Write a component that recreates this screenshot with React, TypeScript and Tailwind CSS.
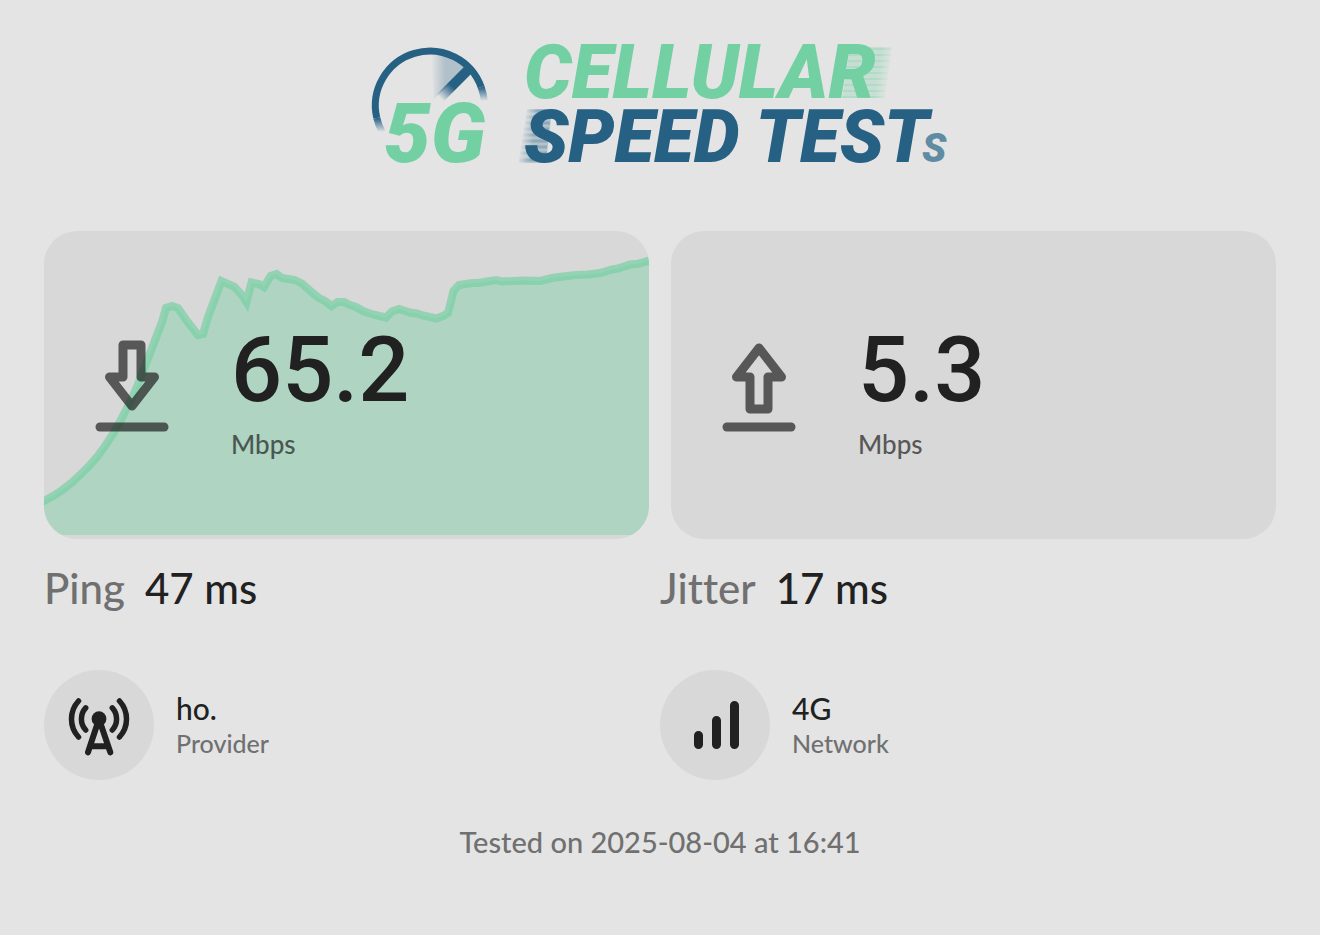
import { ReactNode } from 'react'

const speedPath =
  'M-4 272 L0 270 L10 264.5 L19 258.5 L28 251.5 L36 244 L45 235 L53 226 L61 215 L69 203 L76 190.5 L83 177 L88 167 L93 156 L98 143 L103 130 L108 117 L113 104 L118 91 L122 77 L128 75 L134 77 L143 90 L154 104 L159 103 L164 86 L170 70 L177.5 50 L190 55.5 L198 64 L202.5 71 L207.5 51.5 L215 53 L220 56 L226.5 45 L232.5 43 L238 47 L251 49 L258 52.5 L268 61.5 L275 67 L281 70 L287.5 75 L293.5 71 L300 71 L306 74 L312 76 L319 80 L329 83.5 L342 86.5 L348 80.5 L355 78 L366 81.5 L373 82.5 L379 84.5 L392 87.5 L399 85 L404 82 L409.5 60 L415 54 L428 52 L434 52 L443 50.5 L452 49 L458 50.5 L479 49.5 L496 50 L508 47 L519 45.5 L532 44 L544 43.5 L556 42 L568 38.5 L574 37.5 L586 33.5 L593 33 L605 29.5'

function Logo() {
  return (
    <svg viewBox="0 0 576 120" className="w-[576px] max-w-full overflow-visible">
      <defs>
        <linearGradient id="fadeLeft" gradientUnits="userSpaceOnUse" x1="0" y1="74" x2="0" y2="88">
          <stop offset="0" stopColor="#266184" />
          <stop offset="1" stopColor="#266184" stopOpacity="0" />
        </linearGradient>
        <linearGradient id="fadeRight" gradientUnits="userSpaceOnUse" x1="0" y1="43" x2="0" y2="57">
          <stop offset="0" stopColor="#266184" />
          <stop offset="1" stopColor="#266184" stopOpacity="0" />
        </linearGradient>
        <linearGradient id="needle" gradientUnits="userSpaceOnUse" x1="83" y1="39" x2="68" y2="54">
          <stop offset="0.2" stopColor="#266184" />
          <stop offset="1" stopColor="#266184" stopOpacity="0" />
        </linearGradient>
        <linearGradient id="sweep" gradientUnits="userSpaceOnUse" x1="59" y1="0" x2="73" y2="0">
          <stop offset="0" stopColor="#266184" stopOpacity="0" />
          <stop offset="1" stopColor="#266184" stopOpacity="0.27" />
        </linearGradient>
        <linearGradient id="greenTrail" gradientUnits="userSpaceOnUse" x1="506" y1="28" x2="519" y2="30">
          <stop offset="0" stopColor="#72d0a2" stopOpacity="0.26" />
          <stop offset="1" stopColor="#72d0a2" stopOpacity="0" />
        </linearGradient>
        <linearGradient id="blueTrail" gradientUnits="userSpaceOnUse" x1="149" y1="92" x2="162" y2="94">
          <stop offset="0" stopColor="#266184" stopOpacity="0" />
          <stop offset="1" stopColor="#266184" stopOpacity="0.26" />
        </linearGradient>
      </defs>

      {/* gauge */}
      <path d="M59 10 A52 52 0 0 1 95 24 L62 55 Z" fill="url(#sweep)" />
      <path d="M4.8 74 A54.5 54.5 0 0 1 109.1 43" fill="none" stroke="#266184" strokeWidth="7" />
      <path d="M4.8 74 A54.5 54.5 0 0 0 10.1 88" fill="none" stroke="url(#fadeLeft)" strokeWidth="7" />
      <path d="M109.1 43 A54.5 54.5 0 0 1 112.3 57" fill="none" stroke="url(#fadeRight)" strokeWidth="7" />
      <path d="M98 24 L67 55" fill="none" stroke="url(#needle)" strokeWidth="10" />

      {/* motion trails */}
      <path d="M478 3 H520 L513 54 H470 Z" fill="url(#greenTrail)" />
      <path
        d="M478 5 H520 M477 11 H519 M476 17 H518 M475 23 H517 M474 29 H516 M473 35 H516 M472 41 H515 M471 47 H514 M470 53 H513"
        stroke="url(#greenTrail)"
        strokeWidth="2"
      />
      <path d="M155 65 H180 L174 119 H146 Z" fill="url(#blueTrail)" />
      <path
        d="M155 67 H180 M154 73 H179 M153 79 H178 M152 85 H177 M151 91 H176 M150 97 H176 M149 103 H175 M148 109 H175 M147 116 H174"
        stroke="url(#blueTrail)"
        strokeWidth="3"
      />

      <g fontFamily="Roboto, sans-serif" fontWeight="900" fontStyle="italic">
        <text x="12" y="118" fontSize="83" fill="#72d0a2">5G</text>
        <text x="152" y="54" fontSize="75" fill="#72d0a2">CELLULAR</text>
        <text x="152" y="118" fontSize="73" fill="#266184">SPEED TEST</text>
        <text x="550" y="118" fontSize="40" fill="#5f8ba3">S</text>
      </g>
    </svg>
  )
}

function DownloadIcon() {
  return (
    <svg viewBox="0 0 110 110" className="w-[110px] shrink-0 opacity-70" fill="none" stroke="#212121" strokeWidth="9" strokeLinecap="round" strokeLinejoin="round">
      <path d="M46 15 H64 V47 H77.5 L55 76 L32.5 47 H46 Z" />
      <path d="M23 97 H87" />
    </svg>
  )
}

function UploadIcon() {
  return (
    <svg viewBox="0 0 110 110" className="w-[110px] shrink-0 opacity-70" fill="none" stroke="#212121" strokeWidth="9" strokeLinecap="round" strokeLinejoin="round">
      <path d="M46 79 H64 V47 H77.5 L55 18 L32.5 47 H46 Z" />
      <path d="M23 97 H87" />
    </svg>
  )
}

function TowerIcon() {
  return (
    <svg viewBox="0 0 72 72" className="w-18" fill="none" stroke="#212121" strokeWidth="5.5" strokeLinecap="round" strokeLinejoin="round">
      <circle cx="36" cy="29.7" r="7.4" fill="#212121" stroke="none" />
      <path d="M36 30 L25 63.3 M36 30 L47.3 63.3 M29 57.3 H43" strokeWidth="6" />
      <path d="M15.5 12 A26.6 26.6 0 0 0 15.5 48" />
      <path d="M22.7 18.9 A16.4 16.4 0 0 0 22.7 41" />
      <path d="M49.3 18.9 A16.4 16.4 0 0 1 49.3 41" />
      <path d="M56.5 12 A26.6 26.6 0 0 1 56.5 48" />
    </svg>
  )
}

function BarsIcon() {
  return (
    <svg viewBox="0 0 72 72" className="w-18" fill="none" stroke="#212121" strokeWidth="9" strokeLinecap="round">
      <path d="M19.5 46.5 V55.5 M37.5 31.5 V55.5 M55.5 16.5 V55.5" />
    </svg>
  )
}

interface SpeedCardProps {
  icon: ReactNode
  value: string
  chart?: string
}

function SpeedCard({ icon, value, chart }: SpeedCardProps) {
  return (
    <div className="relative flex-1 h-[308px] px-[33px] flex items-center bg-[#d8d8d8] rounded-[33px] overflow-hidden">
      {chart && (
        <svg viewBox="0 0 605 308" preserveAspectRatio="none" className="absolute inset-0 w-full h-full">
          <path d={`${chart} V304 H-4 Z`} fill="#72d0a2" fillOpacity="0.4" />
          <path d={`${chart} L610 28`} fill="none" stroke="#72d0a2" strokeOpacity="0.65" strokeWidth="8" />
        </svg>
      )}
      <div className="relative flex items-center gap-11">
        {icon}
        <div>
          <p className="font-[Roboto,sans-serif] text-[90px] leading-[118px] font-medium">{value}</p>
          <p className="text-[26px] leading-[28px] font-medium opacity-70">Mbps</p>
        </div>
      </div>
    </div>
  )
}

function Stat({ label, value }: { label: string; value: string }) {
  return (
    <div className="flex-1 flex gap-5 text-[42px] leading-[55px] font-medium">
      <span className="text-[#707070]">{label}</span>
      <span>{value}</span>
    </div>
  )
}

function Detail({ icon, value, label }: { icon: ReactNode; value: string; label: string }) {
  return (
    <div className="flex-1 flex items-center gap-[22px] font-medium">
      <div className="size-[110px] rounded-full bg-[#d8d8d8] flex items-center justify-center">
        {icon}
      </div>
      <div>
        <p className="text-[30px] leading-[36px]">{value}</p>
        <p className="text-[25px] leading-[34px] text-[#707070]">{label}</p>
      </div>
    </div>
  )
}

export default function App() {
  return (
    <div className="min-h-screen bg-[#e4e4e4] text-[#212121] font-[Lato,sans-serif] [font-variant-ligatures:none] p-11">
      <header className="flex justify-center">
        <Logo />
      </header>

      <main>
        <div className="mt-[67px] flex gap-[22px]">
          <SpeedCard icon={<DownloadIcon />} value="65.2" chart={speedPath} />
          <SpeedCard icon={<UploadIcon />} value="5.3" />
        </div>

        <div className="mt-[22px] flex">
          <Stat label="Ping" value="47 ms" />
          <Stat label="Jitter" value="17 ms" />
        </div>

        <div className="mt-[54px] flex">
          <Detail icon={<TowerIcon />} value="ho." label="Provider" />
          <Detail icon={<BarsIcon />} value="4G" label="Network" />
        </div>
      </main>

      <footer className="mt-[42px] text-center text-[29px] leading-10 font-medium text-[#707070]">
        Tested on 2025-08-04 at 16:41
      </footer>
    </div>
  )
}
